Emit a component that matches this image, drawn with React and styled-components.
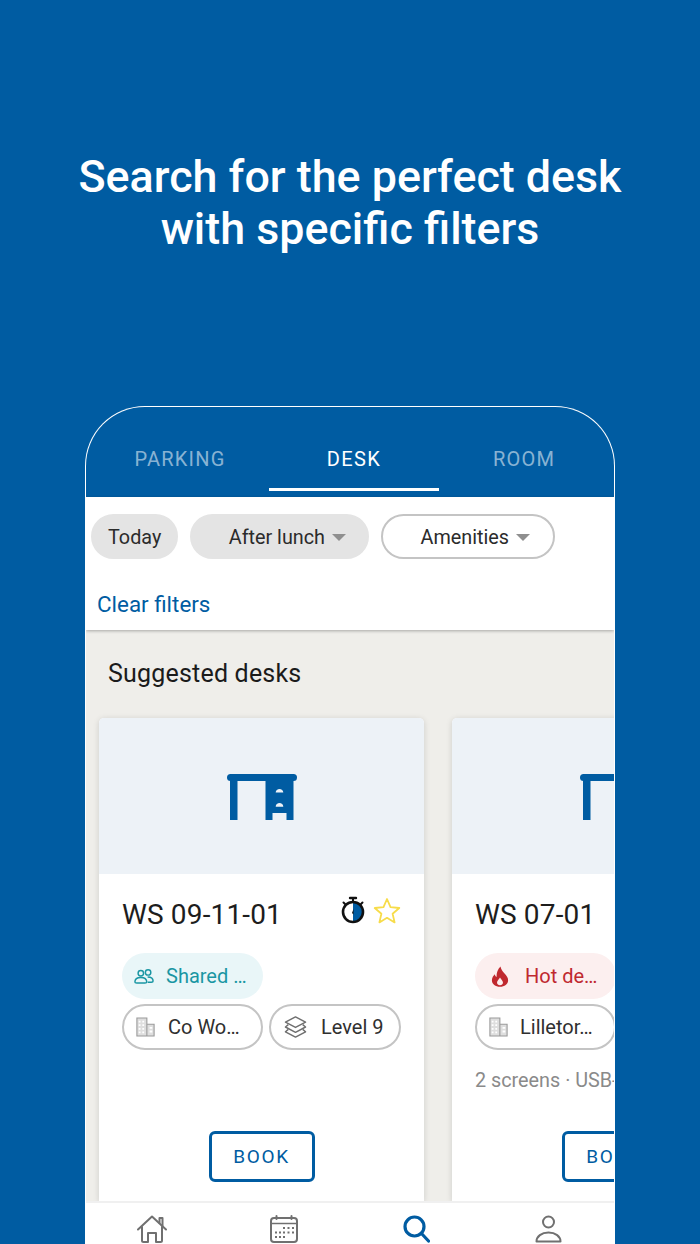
import React from 'react';
import styled, { createGlobalStyle } from 'styled-components';

const BLUE = '#005ca2';

const GlobalStyle = createGlobalStyle`
    html, body {
        margin: 0;
        padding: 0;
        background: ${BLUE};
    }
    * {
        box-sizing: border-box;
    }
`;

const Page = styled.div`
    width: 700px;
    height: 1244px;
    overflow: hidden;
    display: flex;
    flex-direction: column;
    align-items: center;
    background: ${BLUE};
    font-family: Roboto, "Liberation Sans", sans-serif;
`;

const Heading = styled.h1`
    margin: 0;
    padding-top: 151px;
    height: 406px;
    width: 100%;
    text-align: center;
    font-size: 44.8px;
    line-height: 52px;
    font-weight: 500;
    color: #fff;
`;

const Phone = styled.div`
    width: 530px;
    flex: 1;
    min-height: 0;
    display: flex;
    flex-direction: column;
    overflow: hidden;
    background: #fff;
    border: 1px solid rgba(255, 255, 255, 0.7);
    border-bottom: none;
    border-radius: 60px 60px 0 0;
`;

const Tabs = styled.div`
    height: 90px;
    flex: none;
    display: flex;
    padding: 0 5px 6px;
    background: ${BLUE};
`;

const Tab = styled.div`
    flex: none;
    width: ${(p) => p.$width}px;
    display: flex;
    align-items: center;
    justify-content: center;
    padding-top: 22px;
    font-size: 20px;
    letter-spacing: ${(p) => (p.$active ? 1.4 : 1.2)}px;
    color: ${(p) => (p.$active ? '#fff' : 'rgba(255, 255, 255, 0.55)')};
    border-bottom: 3px solid ${(p) => (p.$active ? '#fff' : 'transparent')};
`;

const Filters = styled.div`
    height: 133px;
    flex: none;
    padding: 17px 5px 0;
    background: #fff;
    box-shadow: 0 1px 3px rgba(0, 0, 0, 0.3);
    position: relative;
    z-index: 1;
`;

const FilterRow = styled.div`
    display: flex;
    gap: 11.5px;
`;

const FilterChip = styled.div`
    height: 45px;
    display: flex;
    align-items: center;
    gap: 7px;
    padding: 1px ${(p) => p.$right}px 0 ${(p) => p.$left}px;
    border-radius: 23px;
    font-size: 19.8px;
    color: #2b2b2b;
    background: ${(p) => (p.$outlined ? '#fff' : '#e4e4e4')};
    border: 2px solid ${(p) => (p.$outlined ? '#c4c4c4' : '#e4e4e4')};
`;

const Caret = styled.span`
    width: 0;
    height: 0;
    border-left: 7px solid transparent;
    border-right: 7px solid transparent;
    border-top: 7px solid #8f8f8f;
`;

const ClearFilters = styled.div`
    margin: 32px 0 0 6px;
    font-size: 22.4px;
    line-height: 26px;
    color: ${BLUE};
`;

const Content = styled.div`
    flex: 1;
    min-height: 0;
    overflow: hidden;
    padding: 0 0 0 13px;
    background: #efeeea;
`;

const SectionTitle = styled.h2`
    margin: 0;
    padding: 28px 0 0 9px;
    height: 88px;
    font-size: 25px;
    line-height: 32px;
    font-weight: 400;
    letter-spacing: 0.2px;
    color: #1b1b1b;
`;

const CardRow = styled.div`
    display: flex;
    gap: 28px;
`;

const Card = styled.div`
    flex: none;
    width: 325px;
    height: 483px;
    display: flex;
    flex-direction: column;
    background: #fff;
    border-radius: 5px 5px 0 0;
    box-shadow: 0 1px 6px rgba(0, 0, 0, 0.14);
`;

const CardImage = styled.div`
    height: 156px;
    flex: none;
    display: flex;
    align-items: center;
    justify-content: center;
    padding-top: 2px;
    background: #edf2f7;
    border-radius: 5px 5px 0 0;
`;

const CardBody = styled.div`
    flex: 1;
    display: flex;
    flex-direction: column;
    padding: 23px 23px 19px;
`;

const TitleRow = styled.div`
    display: flex;
    justify-content: space-between;
    align-items: flex-start;
    height: 56px;
`;

const CardTitle = styled.div`
    font-size: 28px;
    line-height: 36px;
    letter-spacing: 0.15px;
    color: #1d1d1d;
    white-space: nowrap;
`;

const StatusIcons = styled.div`
    display: flex;
    align-items: center;
    gap: 8px;
    margin-top: -1px;
`;

const ChipGrid = styled.div`
    display: flex;
    flex-wrap: wrap;
    gap: 5px 6px;
`;

const toneColors = {
    teal: { bg: '#e9f6f8', fg: '#1a96a3' },
    red: { bg: '#fcefef', fg: '#c0292f' },
    plain: { bg: '#fff', fg: '#2f2f2f' },
};

const InfoChip = styled.div`
    flex: none;
    width: ${(p) => p.$width}px;
    height: 46px;
    display: flex;
    align-items: center;
    gap: ${(p) => p.$gap}px;
    padding-left: ${(p) => p.$pad}px;
    border-radius: 23px;
    white-space: nowrap;
    font-size: 20px;
    color: ${(p) => toneColors[p.$tone].fg};
    background: ${(p) => toneColors[p.$tone].bg};
    border: ${(p) => (p.$tone === 'plain' ? '2px solid #c4c4c4' : 'none')};
`;

const Description = styled.div`
    margin-top: 19px;
    font-size: 19.8px;
    line-height: 24px;
    white-space: nowrap;
    color: #8a8a8a;
`;

const BookButton = styled.div`
    align-self: center;
    flex: none;
    margin-top: auto;
    width: 106px;
    height: 51px;
    display: flex;
    align-items: center;
    justify-content: center;
    border: 3px solid ${BLUE};
    border-radius: 6px;
    font-size: 19px;
    letter-spacing: 1.6px;
    color: ${BLUE};
    background: #fff;
`;

const BottomNav = styled.div`
    height: 43px;
    flex: none;
    display: grid;
    grid-template-columns: repeat(4, 1fr);
    align-items: start;
    justify-items: center;
    padding-top: 12px;
    background: #fff;
    border-top: 2px solid #f0f0f0;
    position: relative;
    z-index: 1;
`;

const DeskIcon = () => (
    <svg width="70" height="46" viewBox="0 0 70 46">
        <rect x="0" y="0" width="70" height="7" rx="3.5" fill={BLUE} />
        <rect x="3" y="5" width="7.5" height="41" fill={BLUE} />
        <path d="M38.5 5h28v41h-7v-7h-14v7h-7z" fill={BLUE} />
        <path d="M48.7 18.6c0-4.800 7.600-4.800 7.600 0zM48.700 32.700c0-4.800 7.600-4.800 7.600 0z" fill="#edf2f7" />
    </svg>
);

const StopwatchIcon = () => (
    <svg width="24" height="28" viewBox="0 0 24 28">
        <path d="M9 2h6" stroke="#111" strokeWidth="2.4" strokeLinecap="round" />
        <path d="M12 2v4" stroke="#111" strokeWidth="2" />
        <path d="M2.500 6.500l2 2M21.500 6.500l-2 2" stroke="#111" strokeWidth="2" strokeLinecap="round" />
        <path d="M12 6a10 10 0 0 1 0 20z" fill={BLUE} />
        <path d="M12.500 13l-1.500 4 1.500 1.500z" fill="#111" />
        <circle cx="12" cy="16" r="10" fill="none" stroke="#111" strokeWidth="2.6" />
    </svg>
);

const StarIcon = () => (
    <svg width="28" height="27" viewBox="0 0 28 27">
        <path
            d="M14 2l3.500 8.200 8.800.8-6.700 5.800 2 8.600-7.600-4.600-7.600 4.600 2-8.600L1.700 11l8.800-.8z"
            fill="none"
            stroke="#f7dc4a"
            strokeWidth="1.800"
            strokeLinejoin="round"
        />
    </svg>
);

const UsersIcon = () => (
    <svg width="20" height="17" viewBox="0 0 22 18" fill="none" stroke="#1a96a3" strokeWidth="1.6">
        <circle cx="7.500" cy="5.500" r="3" />
        <circle cx="15.500" cy="4.500" r="3" />
        <path d="M1 15c0-3.500 3-5 6.500-5s6.500 1.500 6.500 5c0 1-1 1.200-2 1.200H3c-1 0-2-.2-2-1.200z" />
        <path d="M15 9.500c3.500 0 6 1.300 6 4.500 0 1-.8 1.300-1.800 1.300H15" />
    </svg>
);

const FlameIcon = () => (
    <svg width="18" height="23" viewBox="0 0 20 24">
        <path
            d="M10.500 1c.8 3.500 2.200 5 4.300 7.500C17.300 11.400 19 13.300 19 16.200 19 20.500 15 23.500 10 23.500S1 20.500 1 16.200c0-3 1.600-5.200 3.300-6.800.2 1.500.8 2.600 1.900 3.100C5.900 8 7.800 3.500 10.500 1z"
            fill="#c0292f"
        />
        <path d="M10 13c1 2 3.300 3.200 3.300 5.700 0 1.900-1.500 3-3.300 3s-3.300-1.100-3.300-3C6.700 16.200 9 15 10 13z" fill="#fcefef" />
    </svg>
);

const BuildingIcon = () => (
    <svg width="19" height="20" viewBox="0 0 21 22">
        <path d="M1 1h11v20H1zM12 8h8v13h-8z" fill="#dedede" stroke="#9a9a9a" strokeWidth="1.200" />
        <path d="M3 4h2v2H3zM7 4h2v2H7zM3 8h2v2H3zM7 8h2v2H7zM3 12h2v2H3zM7 12h2v2H7zM3 16h2v2H3zM7 16h2v2H7zM15 11h3v2h-3zM15 15h3v2h-3z" fill="#fff" />
    </svg>
);

const LayersIcon = () => (
    <svg width="23" height="24" viewBox="0 0 24 24" fill="none" stroke="#6f6f6f" strokeWidth="1.500" strokeLinejoin="round">
        <path d="M12 1.500l10.500 5.500L12 12.500 1.500 7z" />
        <path d="M4.500 9.500l-3 2.500L12 17.500 22.500 12l-3-2.500" />
        <path d="M4.500 14.500l-3 2.500L12 22.500 22.500 17l-3-2.500" />
    </svg>
);

const HomeIcon = () => (
    <svg width="30" height="28" viewBox="0 0 30 28" fill="none" stroke="#707070" strokeWidth="2" strokeLinejoin="round" strokeLinecap="round">
        <path d="M1 14.500L15 1.500l14 13" />
        <path d="M22.500 8V3h3V11" />
        <path d="M5 12v13.500c0 1 .5 1.500 1.500 1.500H11v-9h8v9h4.500c1 0 1.500-.5 1.500-1.500V12" />
    </svg>
);

const CalendarIcon = () => (
    <svg width="28" height="28" viewBox="0 0 28 28" fill="none" stroke="#707070" strokeWidth="2">
        <rect x="1" y="3" width="26" height="24" rx="3" />
        <path d="M1 8.500h26" strokeWidth="1.500" />
        <path d="M6.500 1v3M21.500 1v3" strokeLinecap="round" />
        <path
            d="M13 12h2v2h-2zM17.500 12h2v2h-2zM22 12h2v2h-2zM5 16.500h2v2H5zM9 16.500h2v2H9zM13 16.500h2v2h-2zM17.500 16.500h2v2h-2zM22 16.500h2v2h-2zM5 21h2v2H5zM9 21h2v2H9zM13 21h2v2h-2z"
            fill="#707070"
            stroke="none"
        />
    </svg>
);

const SearchIcon = () => (
    <svg width="27" height="28" viewBox="0 0 27 28" fill="none" stroke={BLUE} strokeWidth="3.200" strokeLinecap="round">
        <circle cx="11.500" cy="11.500" r="9.500" />
        <path d="M18.500 18.500l7 7.500" />
    </svg>
);

const UserIcon = () => (
    <svg width="27" height="28" viewBox="0 0 27 28" fill="none" stroke="#707070" strokeWidth="2">
        <circle cx="13.500" cy="7" r="5.500" />
        <path d="M1.500 26.500c0-5 5-9 12-9s12 4 12 9z" strokeLinejoin="round" />
    </svg>
);

const DESKS = [
    {
        id: 'WS 09-11-01',
        status: true,
        chips: [
            { text: 'Shared …', tone: 'teal', width: 141, pad: 12, gap: 12, icon: <UsersIcon /> },
            { text: 'Co Wo…', tone: 'plain', width: 141, pad: 12, gap: 13, icon: <BuildingIcon /> },
            { text: 'Level 9', tone: 'plain', width: 132, pad: 13, gap: 14, icon: <LayersIcon /> },
        ],
    },
    {
        id: 'WS 07-01',
        description: '2 screens · USB-C',
        chips: [
            { text: 'Hot de…', tone: 'red', width: 141, pad: 16, gap: 16, icon: <FlameIcon /> },
            { text: 'Lilletor…', tone: 'plain', width: 141, pad: 12, gap: 12, icon: <BuildingIcon /> },
        ],
    },
];

function App() {
    return (
        <Page>
            <GlobalStyle />
            <Heading>
                Search for the perfect desk
                <br />
                with specific filters
            </Heading>
            <Phone>
                <Tabs>
                    <Tab $width={178}>PARKING</Tab>
                    <Tab $width={170} $active>DESK</Tab>
                    <Tab $width={170}>ROOM</Tab>
                </Tabs>
                <Filters>
                    <FilterRow>
                        <FilterChip $left={15} $right={15}>Today</FilterChip>
                        <FilterChip $left={37} $right={21}>After lunch<Caret /></FilterChip>
                        <FilterChip $left={38} $right={23} $outlined>Amenities<Caret /></FilterChip>
                    </FilterRow>
                    <ClearFilters>Clear filters</ClearFilters>
                </Filters>
                <Content>
                    <SectionTitle>Suggested desks</SectionTitle>
                    <CardRow>
                        {DESKS.map((desk) => (
                            <Card key={desk.id}>
                                <CardImage><DeskIcon /></CardImage>
                                <CardBody>
                                    <TitleRow>
                                        <CardTitle>{desk.id}</CardTitle>
                                        {desk.status && (
                                            <StatusIcons>
                                                <StopwatchIcon />
                                                <StarIcon />
                                            </StatusIcons>
                                        )}
                                    </TitleRow>
                                    <ChipGrid>
                                        {desk.chips.map((chip) => (
                                            <InfoChip key={chip.text} $tone={chip.tone} $width={chip.width} $pad={chip.pad} $gap={chip.gap}>
                                                {chip.icon}
                                                {chip.text}
                                            </InfoChip>
                                        ))}
                                    </ChipGrid>
                                    {desk.description && <Description>{desk.description}</Description>}
                                    <BookButton>BOOK</BookButton>
                                </CardBody>
                            </Card>
                        ))}
                    </CardRow>
                </Content>
                <BottomNav>
                    <HomeIcon />
                    <CalendarIcon />
                    <SearchIcon />
                    <UserIcon />
                </BottomNav>
            </Phone>
        </Page>
    );
}

export default App;
